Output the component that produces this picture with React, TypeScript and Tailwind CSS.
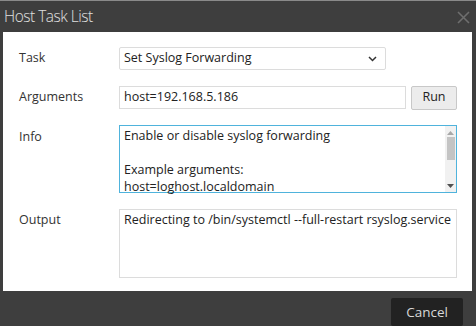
import React from 'react';

const font = { fontFamily: '"Open Sans", "Noto Sans", sans-serif' };

function Label({ children }: { children: React.ReactNode }) {
  return <div className="w-[100px] shrink-0 text-[12.5px] text-[#333]">{children}</div>;
}

export default function App() {
  return (
    <div className="w-[476px] h-[326px] bg-[#3e3e3e] flex flex-col overflow-hidden" style={font}>
      <div className="h-[32px] shrink-0 border-t border-[#8a8a8a] flex items-center justify-between pl-[4px] pr-[6px]">
        <span className="text-[15.5px] font-light tracking-[-0.5px] text-[#e0e0e0] leading-none">Host Task List</span>
        <svg width="13" height="13" viewBox="0 0 13 13" className="mt-[1px]">
          <path d="M1 1L12 12M12 1L1 12" stroke="#6e6e6e" strokeWidth="1.6" />
        </svg>
      </div>

      <div className="mx-[3px] mr-[4px] h-[261px] bg-white pl-[16px] pr-[15px] pt-[15px] flex flex-col">
        <div className="flex items-center h-[23px]">
          <Label>Task</Label>
          <div className="w-[267px] h-[23px] border border-[#dcdcdc] rounded-[2px] flex items-center justify-between pl-[4px] pr-[8px] text-[12.5px] text-[#222]">
            <span>Set Syslog Forwarding</span>
            <svg width="9" height="6" viewBox="0 0 9 6">
              <path d="M1 1L4.5 4.5L8 1" stroke="#333" strokeWidth="1.5" fill="none" />
            </svg>
          </div>
        </div>

        <div className="flex items-center mt-[15px] h-[25px]">
          <Label>Arguments</Label>
          <div className="w-[287px] h-[23px] border border-[#dcdcdc] flex items-center pl-[4px] text-[12.5px] text-[#222]">
            host=192.168.5.186
          </div>
          <div className="ml-[5px] w-[46px] h-[24px] border border-[#c8c8c8] rounded-[2px] bg-[#ececec] flex items-center justify-center text-[12.5px] text-[#222]">
            Run
          </div>
        </div>

        <div className="flex mt-[15px]">
          <div className="pt-[3px]">
            <Label>Info</Label>
          </div>
          <div className="w-[338px] h-[68px] border border-[#4fb3dc] flex">
            <div className="flex-1 pl-[4px] pt-[1px] text-[12.5px] leading-[17px] text-[#222]">
              <div>Enable or disable syslog forwarding</div>
              <div>&nbsp;</div>
              <div>Example arguments:</div>
              <div>host=loghost.localdomain</div>
            </div>
            <div className="w-[11px] bg-[#f1f1f1] flex flex-col items-center">
              <svg width="7" height="5" viewBox="0 0 7 5" className="mt-[4px]">
                <path d="M0 5L3.5 1L7 5Z" fill="#a8a8a8" />
              </svg>
              <div className="w-[8px] h-[23px] bg-[#c4c4c4] mt-[2px]" />
              <div className="flex-1" />
              <svg width="7" height="5" viewBox="0 0 7 5" className="mb-[3px]">
                <path d="M0 0L3.5 4L7 0Z" fill="#505050" />
              </svg>
            </div>
          </div>
        </div>

        <div className="flex mt-[16px]">
          <div className="pt-[2px]">
            <Label>Output</Label>
          </div>
          <div className="w-[338px] h-[69px] border border-[#dcdcdc] pl-[4px] pt-[1px] text-[12.5px] leading-[17px] text-[#222] whitespace-nowrap">
            Redirecting to /bin/systemctl --full-restart rsyslog.service
          </div>
        </div>
      </div>

      <div className="flex justify-end pr-[13px] pt-[7px]">
        <div className="w-[72px] h-[28px] bg-[#222] rounded-[2px] flex items-center justify-center text-[13.5px] text-[#d8d8d8]">
          Cancel
        </div>
      </div>
    </div>
  );
}
